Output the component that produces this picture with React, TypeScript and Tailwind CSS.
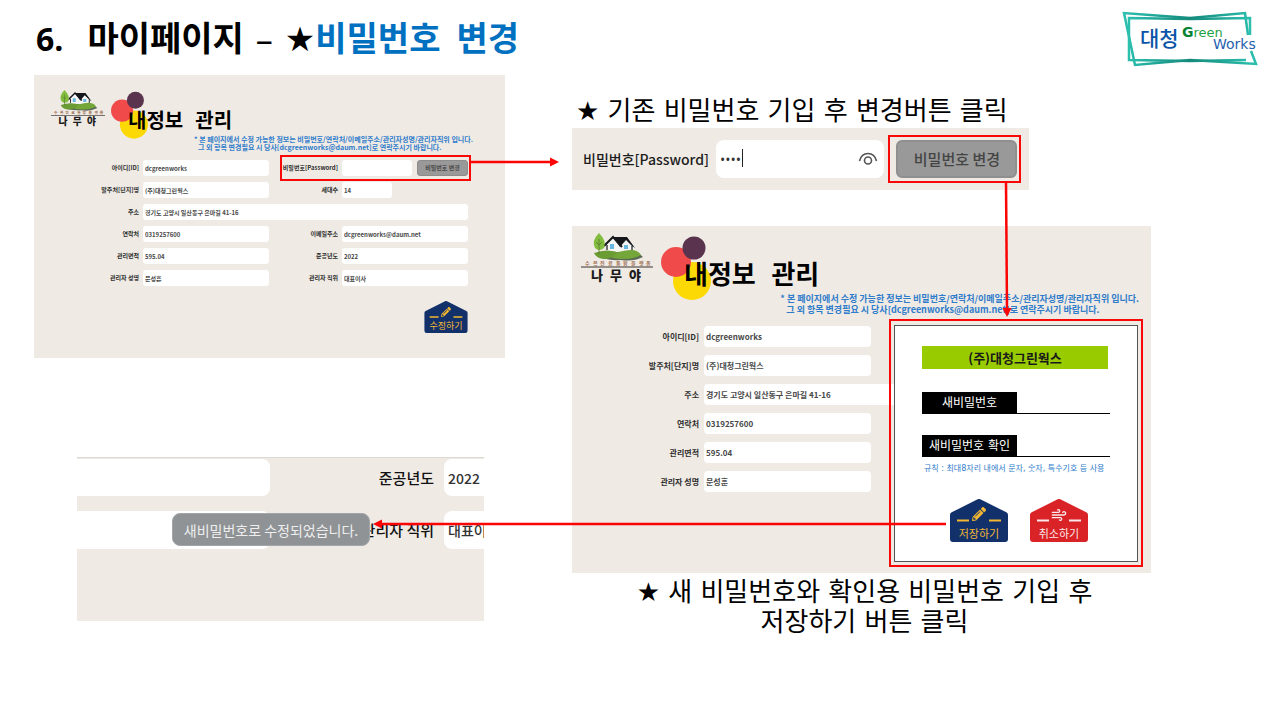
import React from 'react';
import clsx from 'clsx';
import { Wind } from 'lucide-react';
import { FaPencilAlt } from 'react-icons/fa';

interface FieldProps {
  id: string;
  label: string;
  value: string;
  large?: boolean;
  controlClass?: string;
}

interface HouseButtonProps {
  label: string;
  tone: 'navy' | 'red';
  large?: boolean;
}

const SPACED_FONT = "font-['DejaVu_Sans','Noto_Sans_CJK_KR',sans-serif]";

// Company logo in the page header
const GreenWorksLogo: React.FC = () => (
  <svg viewBox="0 0 140 56" className="h-14 w-[140px] shrink-0" role="img" aria-label="대청 Green Works">
    <defs>
      <linearGradient id="frame" x1="0" x2="1" y1="0" y2="0">
        <stop offset="0" stopColor="#2bbfae" />
        <stop offset="0.5" stopColor="#158a7c" />
        <stop offset="1" stopColor="#2bbfae" />
      </linearGradient>
    </defs>
    <path d="M126 24 L123 2 L68 7 L2 2 L13 54 L68 49 L134 53 L129 40" fill="none" stroke="url(#frame)" strokeWidth="2.5" />
    <path d="M128 24 V7 L68 8 L7 7 V49 L68 50 L124 49" fill="none" stroke="url(#frame)" strokeWidth="2.5" />
    <text x="18" y="35" fontSize="21" fontWeight="500" fill="#0a55a8" fontFamily="Noto Sans CJK KR, sans-serif">대청</text>
    <text x="60" y="26" fontSize="13" fill="#1fa049" fontFamily="DejaVu Sans, sans-serif">
      <tspan fontWeight="700" fontSize="14" fill="#058334">G</tspan>reen
    </text>
    <text x="91" y="38" fontSize="14" fill="#1f62ae" fontFamily="DejaVu Sans, sans-serif">Works</text>
  </svg>
);

const NamuyaLogo: React.FC<{ large?: boolean }> = ({ large }) => (
  <svg
    viewBox="0 0 72 48"
    className={clsx('shrink-0 overflow-visible', large ? 'h-12 w-[72px]' : 'h-9 w-[54px]')}
    role="img"
    aria-label="나무야"
  >
    <path d="M15 22 Q26 15 42 19 Q56 18 62 24 Q52 29 40 27 Q24 28 15 22Z" fill="#5b6a55" />
    <path d="M24 11 L33 4 L42 11 V19 H26 Z" fill="#f6f6f4" />
    <path d="M37 12 L44 6 L53 13 V19 H37 Z" fill="#f6f6f4" />
    <path d="M23 13 L32 4 L41 14" fill="none" stroke="#15171a" strokeWidth="2" />
    <path d="M32 4 H46 L54 15 L51 13 L45 7 L39 14 Z" fill="#15171a" />
    <path d="M26 12 V17 M51 13 V18" stroke="#15171a" strokeWidth="1.2" />
    <path d="M29 11 h4 v5 h-4z M43 12 h4 v4 h-4z" fill="#69b6de" />
    <path d="M13 20 Q26 15 40 20 Q31 26 22 26 Q15 25 13 20Z" fill="#6b9c33" />
    <path d="M31 25 Q36 17 50 17 Q57 17 60 22 Q50 28 31 25Z" fill="#74a63a" />
    <path d="M18 0 Q26 8 23 15 Q18 19 14 15 Q10 8 18 0Z" fill="#83bd3f" />
    <path d="M18 6 V21 M18 12 L21 9 M18 12 L15 9" stroke="#55782c" strokeWidth="0.8" fill="none" />
    <text y="32" x="4 12 19 27 35 42 50 58 65" fontSize="5" fontWeight="700" fill="#a17358" fontFamily="Noto Sans CJK KR, sans-serif">
      수목진료통합플랫폼
    </text>
    <path d="M0 34 H72" stroke="#77706c" strokeWidth="1.5" />
    <text y="47" x="10 29 48" fontSize="13" fontWeight="900" fill="#1c1c1c" fontFamily="Noto Sans CJK KR, sans-serif">
      나무야
    </text>
  </svg>
);

const Circles: React.FC<{ large?: boolean }> = ({ large }) => (
  <svg
    viewBox="0 0 50 64"
    className={clsx('absolute', large ? '-left-[23px] -top-[25px] h-16 w-[50px]' : '-left-[17px] -top-[19px] h-12 w-[37px]')}
    aria-hidden="true"
  >
    <circle cx="31" cy="45" r="19" fill="#fcd905" />
    <circle cx="15" cy="26" r="15" fill="#f04a4a" />
    <circle cx="33" cy="12" r="11.5" fill="#5a344e" />
  </svg>
);

const PanelHeader: React.FC<{ large?: boolean }> = ({ large }) => (
  <>
    <div className={clsx('flex items-start', large ? 'h-[60px]' : 'h-[45px]')}>
      <NamuyaLogo large={large} />
      <div className={clsx('relative', large ? 'ml-[31px] mt-7' : 'ml-[23px] mt-5')}>
        <Circles large={large} />
        <h2
          className={clsx(
            "relative whitespace-nowrap font-['DejaVu_Sans_Mono','Noto_Sans_CJK_KR',sans-serif] font-bold text-black",
            large ? 'text-[26px] leading-7' : 'text-[20px] leading-[22px]'
          )}
        >
          내정보 관리
        </h2>
      </div>
    </div>
    <div className={clsx('flex justify-end', large ? 'pr-3' : 'pr-8')}>
      <p
        className={clsx(
          'whitespace-nowrap font-semibold text-[#2f7ccb]',
          large ? 'text-[9px] leading-[11px]' : 'text-[7px] leading-[8px]'
        )}
      >
        * 본 페이지에서 수정 가능한 정보는 비밀번호/연락처/이메일주소/관리자성명/관리자직위 입니다.
        <br />
        <span className={large ? 'pl-1.5' : 'pl-1'}>그 외 항목 변경필요 시 당사[dcgreenworks@daum.net]로 연락주시기 바랍니다.</span>
      </p>
    </div>
  </>
);

const Field: React.FC<FieldProps> = ({ id, label, value, large, controlClass }) => (
  <>
    <label
      htmlFor={id}
      className={clsx(
        'self-center whitespace-nowrap text-right font-bold text-[#2e2e2e]',
        large ? 'col-start-1 text-[8px] leading-3' : 'text-[6px] leading-2'
      )}
    >
      {label}
    </label>
    <input
      id={id}
      defaultValue={value}
      className={clsx(
        'w-full min-w-0 bg-white px-0.5 font-semibold text-[#484848] outline-none',
        large ? 'h-[21px] rounded text-[8px]' : 'h-4 rounded-[3px] text-[6px]',
        controlClass
      )}
    />
  </>
);

// House shaped action button
const HouseButton: React.FC<HouseButtonProps> = ({ label, tone, large }) => {
  const accent = tone === 'navy' ? 'text-[#f2b632]' : 'text-[#fbe9e9]';
  return (
    <button
      type="button"
      className={clsx('relative flex flex-col items-center', accent, large ? 'h-[43px] w-[58px] pt-2' : 'h-8 w-11 pt-1.5')}
    >
      <svg viewBox="0 0 58 43" className="absolute inset-0 h-full w-full" aria-hidden="true">
        <path
          d="M29 3 L55 16 V40 H3 V16 Z"
          fill={tone === 'navy' ? '#12316b' : '#d92327'}
          stroke={tone === 'navy' ? '#12316b' : '#d92327'}
          strokeWidth="6"
          strokeLinejoin="round"
        />
        <path d="M7 21.5 H19 M39 21.5 H51" stroke="currentColor" strokeWidth="2" />
      </svg>
      {tone === 'navy' ? (
        <FaPencilAlt className={clsx('relative', large ? 'size-3.5' : 'size-2.5')} />
      ) : (
        <Wind className="relative size-4" strokeWidth={2} />
      )}
      <span
        className={clsx(
          'absolute inset-x-0 text-center',
          large ? 'bottom-[3px] text-[11px] leading-3' : 'bottom-0.5 text-[9px] leading-[10px]'
        )}
      >
        {label}
      </span>
    </button>
  );
};

const MyInfoPanel: React.FC = () => (
  <section className="bg-[#efeae4] pb-[25px] pl-[17px] pt-[15px]">
    <PanelHeader />
    <form className="-ml-[17px] mt-[9px] pr-[37px]">
      <div className="grid grid-cols-[105px_1fr_65px_1fr] gap-x-1 gap-y-1.5">
        <Field id="my-id" label="아이디[ID]" value="dcgreenworks" />
        <div className="relative col-span-2 grid grid-cols-[65px_1fr] gap-x-1">
          <label htmlFor="my-pw" className="self-center whitespace-nowrap text-right text-[6px] font-bold leading-2 text-[#2e2e2e]">
            비밀번호[Password]
          </label>
          <div className="flex gap-[5px]">
            <input id="my-pw" type="password" className="h-4 w-0 flex-1 rounded-[3px] bg-white px-0.5 text-[6px] outline-none" />
            <button type="button" className="h-4 w-[51px] rounded-[3px] border border-[#8c8c8c] bg-[#999] text-[6px] font-bold leading-2 text-[#484848]">
              비밀번호 변경
            </button>
          </div>
          <div className="pointer-events-none absolute -bottom-[5px] -right-[3px] -top-[5px] left-[7px] z-10 border-2 border-[#f90808]">
            <svg viewBox="0 0 90 10" className="absolute left-full top-0 h-2.5 w-[90px]" aria-hidden="true">
              <path d="M0 5 H83" stroke="#fb0404" strokeWidth="2.5" />
              <path d="M90 5 L81 0.5 V9.5 Z" fill="#fb0404" />
            </svg>
          </div>
        </div>
        <Field id="my-client" label="발주처[단지]명" value="(주)대청그린웍스" />
        <Field id="my-units" label="세대수" value="14" controlClass="max-w-[50px]" />
        <Field id="my-address" label="주소" value="경기도 고양시 일산동구 은마길 41-16" controlClass="col-span-3" />
        <Field id="my-phone" label="연락처" value="0319257600" />
        <Field id="my-email" label="이메일주소" value="dcgreenworks@daum.net" />
        <Field id="my-area" label="관리면적" value="595.04" />
        <Field id="my-year" label="준공년도" value="2022" />
        <Field id="my-manager" label="관리자 성명" value="문성훈" />
        <Field id="my-position" label="관리자 직위" value="대표이사" />
      </div>
      <div className="mt-[15px] flex justify-end">
        <HouseButton label="수정하기" tone="navy" />
      </div>
    </form>
  </section>
);

const ResultPanel: React.FC = () => (
  <section className="relative ml-[43px] mr-[21px] border-t border-[#dcd9d5] bg-[#efeae4] pb-[72px] pt-px">
    <div className="grid grid-cols-[1fr_154px_40px] items-center gap-x-2.5 gap-y-[15px]">
      <input aria-label="관리면적" className="h-[37px] w-full rounded-r-lg bg-white outline-none" />
      <label htmlFor="done-year" className="text-right text-[15px] font-medium leading-5 text-[#111]">준공년도</label>
      <input id="done-year" defaultValue="2022" className="h-[37px] w-full rounded-l-lg bg-white pl-1 text-[14px] font-medium text-[#333] outline-none" />
      <input aria-label="관리자 성명" className="h-[38px] w-full rounded-r-lg bg-white outline-none" />
      <label htmlFor="done-position" className="text-right text-[15px] font-medium leading-5 text-[#111]">관리자 직위</label>
      <input id="done-position" defaultValue="대표이사" className="h-[38px] w-full rounded-l-lg bg-white pl-1 text-[14px] font-medium text-[#333] outline-none" />
    </div>
    <div role="status" className="absolute left-[95px] top-[55px] flex h-[33px] w-[198px] items-center justify-center whitespace-nowrap rounded-lg border border-[#a3a6a8] bg-[#8f9395] text-[14px] leading-5 text-[#eee]">
      새비밀번호로 수정되었습니다.
    </div>
    <svg viewBox="0 0 573 10" className="pointer-events-none absolute left-[296px] top-[61px] z-20 h-2.5 w-[573px]" aria-hidden="true">
      <path d="M7 5 H573" stroke="#fb0404" strokeWidth="2.5" />
      <path d="M0 5 L9 0.5 V9.5 Z" fill="#fb0404" />
    </svg>
  </section>
);

const PasswordBar: React.FC = () => (
  <section className="flex w-[79%] items-center bg-[#efeae4] py-3 pl-[11px] pr-3">
    <label htmlFor="bar-pw" className="w-[133px] shrink-0 whitespace-nowrap text-[14px] font-medium leading-5 text-[#1c1c1c]">
      비밀번호[Password]
    </label>
    <div className="relative mr-3 flex-1">
      <input
        id="bar-pw"
        type="password"
        defaultValue="1234"
        className="h-[38px] w-full rounded-lg bg-white pl-1 pr-8 font-['Open_Sans',sans-serif] text-[14px] text-[#333] outline-none"
      />
      <span className="absolute left-[26px] top-[9px] h-[18px] w-px bg-[#222]" />
      <svg viewBox="0 0 20 14" className="absolute right-1.5 top-3 h-3.5 w-5" fill="none" stroke="#555" strokeWidth="1.6" aria-hidden="true">
        <path d="M1.5 9 C4 -1 16 -1 18.5 9" />
        <circle cx="10" cy="8.5" r="3.5" />
      </svg>
    </div>
    <div className="relative">
      <button type="button" className="h-[38px] w-[121px] rounded-md border-2 border-[#8f8f8f] bg-[#999] text-[15px] font-medium leading-5 text-[#444]">
        비밀번호 변경
      </button>
      <div className="pointer-events-none absolute -bottom-[5px] -left-2 -right-1 -top-[5px] z-10 border-2 border-[#f90808]">
        <svg viewBox="0 0 10 136" className="absolute right-[7px] top-full h-[136px] w-2.5" aria-hidden="true">
          <path d="M4 0 L5 129" stroke="#fb0404" strokeWidth="2.5" />
          <path d="M5 136 L0.5 127 H9.5 Z" fill="#fb0404" />
        </svg>
      </div>
    </div>
  </section>
);

const NewPasswordDialog: React.FC = () => (
  <div role="dialog" aria-label="새비밀번호" className="absolute right-2 top-[93px] w-[254px] border-2 border-[#f90808] p-[3px] pt-1">
    <form className="border border-[#555] bg-white px-[27px] pb-[19px] pt-5">
      <div className="mr-0.5 bg-[#99cc00] text-center text-[13px] font-bold leading-[23px] text-[#1a1a1a]">(주)대청그린웍스</div>
      <div className="mt-[23px] flex h-[22px]">
        <label htmlFor="new-pw" className={clsx('w-[95px] bg-black text-center text-[12px] leading-[22px] text-white', SPACED_FONT)}>
          새비밀번호
        </label>
        <input id="new-pw" type="password" className="w-0 flex-1 border-b border-black outline-none" />
      </div>
      <div className="mt-[21px] flex h-[22px]">
        <label htmlFor="new-pw-check" className={clsx('w-[95px] bg-black text-center text-[12px] leading-[22px] text-white', SPACED_FONT)}>
          새비밀번호 확인
        </label>
        <input id="new-pw-check" type="password" className="w-0 flex-1 border-b border-black outline-none" />
      </div>
      <p className={clsx('mt-1.5 whitespace-nowrap pl-0.5 text-[8px] leading-3 text-[#2f7ccb]', SPACED_FONT)}>
        규칙 : 최대8자리 내에서 문자, 숫자, 특수기호 등 사용
      </p>
      <div className="mt-6 flex justify-center gap-[22px] pl-1.5">
        <HouseButton label="저장하기" tone="navy" large />
        <HouseButton label="취소하기" tone="red" large />
      </div>
    </form>
  </div>
);

const ChangePanel: React.FC = () => (
  <section className="relative bg-[#efeae4] pb-[81px] pl-[9px] pt-[7px]">
    <PanelHeader large />
    <div className="-ml-[9px] mt-[11px] grid grid-cols-[127px_167px_1fr] gap-x-[5px] gap-y-2 pr-[17px]">
      <Field large id="edit-id" label="아이디[ID]" value="dcgreenworks" />
      <Field large id="edit-client" label="발주처[단지]명" value="(주)대청그린웍스" />
      <Field large id="edit-address" label="주소" value="경기도 고양시 일산동구 은마길 41-16" controlClass="col-span-2" />
      <Field large id="edit-phone" label="연락처" value="0319257600" />
      <Field large id="edit-area" label="관리면적" value="595.04" />
      <Field large id="edit-manager" label="관리자 성명" value="문성훈" />
    </div>
    <NewPasswordDialog />
  </section>
);

const App: React.FC = () => {
  return (
    <div className="min-h-screen bg-white font-['Noto_Sans_CJK_KR',sans-serif] text-black">
      <header className="flex items-start justify-between pl-9 pr-3 pt-[11px]">
        <h1 className={clsx('flex items-center whitespace-nowrap text-[34px] font-bold leading-[56px]', SPACED_FONT)}>
          <span className="mr-6 font-['Open_Sans',sans-serif] text-[32px]">6.</span>
          <span>마이페이지</span>
          <span className="mx-3 font-['Open_Sans',sans-serif] font-medium">–</span>
          <span>★</span>
          <span className="mr-4 text-[#0070c0]">비밀번호</span>
          <span className="text-[#0070c0]">변경</span>
        </h1>
        <GreenWorksLogo />
      </header>
      <main className="mt-2 grid grid-cols-[471fr_579fr] items-start gap-x-[67px] pl-[34px] pr-[123px]">
        <div className="flex flex-col gap-[99px]">
          <MyInfoPanel />
          <ResultPanel />
        </div>
        <div className="pt-[19px]">
          <p className={clsx('whitespace-nowrap pl-1 text-[26px] leading-[34px]', SPACED_FONT)}>★ 기존 비밀번호 기입 후 변경버튼 클릭</p>
          <PasswordBar />
          <div className="mt-9">
            <ChangePanel />
          </div>
          <p className={clsx('mt-1 pl-1.5 text-center text-[26px] leading-[30px]', SPACED_FONT)}>
            ★ 새 비밀번호와 확인용 비밀번호 기입 후
            <br />
            저장하기 버튼 클릭
          </p>
        </div>
      </main>
    </div>
  );
};

export default App;
